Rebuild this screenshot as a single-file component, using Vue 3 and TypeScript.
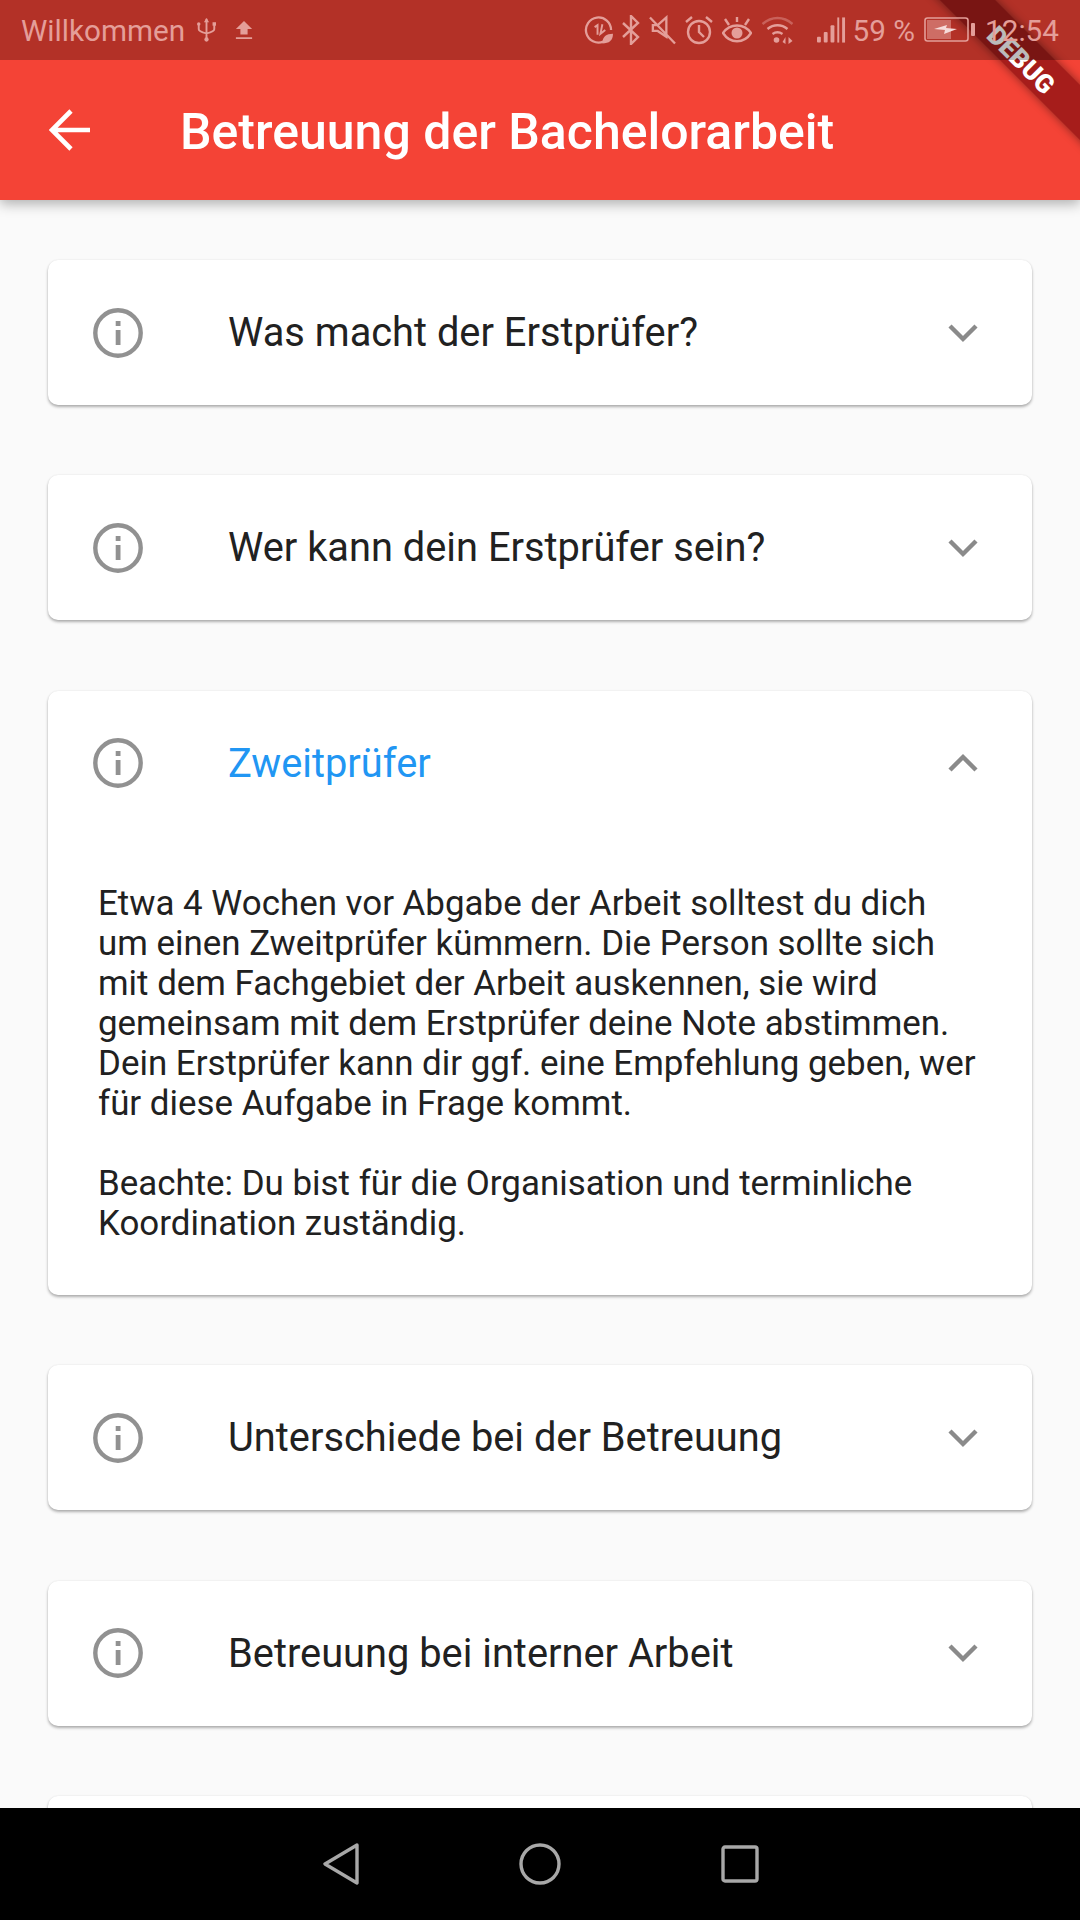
<script setup lang="ts">
interface Section {
  title: string;
  open?: boolean;
  body?: string[];
}

const sections: Section[] = [
  { title: 'Was macht der Erstprüfer?' },
  { title: 'Wer kann dein Erstprüfer sein?' },
  {
    title: 'Zweitprüfer',
    open: true,
    body: [
      'Etwa 4 Wochen vor Abgabe der Arbeit solltest du dich um einen Zweitprüfer kümmern. Die Person sollte sich mit dem Fachgebiet der Arbeit auskennen, sie wird gemeinsam mit dem Erstprüfer deine Note abstimmen. Dein Erstprüfer kann dir ggf. eine Empfehlung geben, wer für diese Aufgabe in Frage kommt.',
      'Beachte: Du bist für die Organisation und terminliche Koordination zuständig.',
    ],
  },
  { title: 'Unterschiede bei der Betreuung' },
  { title: 'Betreuung bei interner Arbeit' },
];
</script>

<template>
  <div class="screen">
    <header class="app-bar">
      <svg class="back" width="42" height="42" viewBox="0 0 42 42" fill="none" stroke="#fff" stroke-width="4.6">
        <path d="M41 21H4M22 2L3 21l19 19" />
      </svg>
      <h1>Betreuung der Bachelorarbeit</h1>
    </header>

    <main class="content">
      <section v-for="s in sections" :key="s.title" class="card">
        <div class="card-head">
          <svg class="info" width="50" height="50" viewBox="0 0 50 50" fill="none">
            <circle cx="25" cy="25" r="22.7" stroke="#919191" stroke-width="4.4" />
            <rect x="22.7" y="13" width="4.8" height="5" fill="#919191" />
            <rect x="22.7" y="22" width="4.8" height="15" fill="#919191" />
          </svg>
          <span class="card-title" :class="{ active: s.open }">{{ s.title }}</span>
          <svg class="chevron" :class="{ up: s.open }" width="30" height="20" viewBox="0 0 30 20" fill="none" stroke="#8a8a8a" stroke-width="4.4">
            <path d="M2 3l13 13L28 3" />
          </svg>
        </div>
        <div v-if="s.body" class="card-body">
          <p v-for="p in s.body" :key="p">{{ p }}</p>
        </div>
      </section>
      <!-- next card is only a sliver above the nav bar -->
      <section class="card card-peek"></section>
    </main>

    <nav class="nav-bar">
      <svg width="36" height="42" viewBox="0 0 36 42" fill="none" stroke="#a8a8a8" stroke-width="3.4" stroke-linejoin="round">
        <path d="M34 2L2 21l32 19z" />
      </svg>
      <svg width="42" height="42" viewBox="0 0 42 42" fill="none" stroke="#a8a8a8" stroke-width="3.4">
        <circle cx="21" cy="21" r="19" />
      </svg>
      <svg width="38" height="38" viewBox="0 0 38 38" fill="none" stroke="#a8a8a8" stroke-width="3.4">
        <rect x="2" y="2" width="34" height="34" rx="2" />
      </svg>
    </nav>

    <div class="debug"><span>DEBUG</span></div>

    <!-- system status bar sits over the app, ribbon included -->
    <div class="status-bar">
      <div class="status-left">
        <span>Willkommen</span>
        <svg class="st-usb" width="19" height="28" viewBox="0 0 22 28" fill="none" stroke="#e49e99" stroke-width="2.2">
          <path d="M11 1v24M2 8v5c0 2 2 3 9 5 7-2 9-3 9-5V8" />
          <path d="M11 0l-3 5h6z" fill="#e49e99" stroke="none" />
          <circle cx="11" cy="25" r="2.5" fill="#e49e99" stroke="none" />
          <circle cx="2" cy="7" r="2" fill="#e49e99" stroke="none" />
          <rect x="18" y="5" width="4" height="4" fill="#e49e99" stroke="none" />
        </svg>
        <svg class="st-up" width="18" height="22" viewBox="0 0 20 22" fill="#e49e99">
          <path d="M10 1l9 9h-5v6H6v-6H1zM1 19h18v2H1z" />
        </svg>
      </div>
      <div class="status-right">
        <svg width="29" height="30" viewBox="0 0 30 30" fill="none" stroke="#e49e99" stroke-width="2.4">
          <path d="M20 27A13 13 0 1 1 28 15" />
          <path d="M11 12l3-2v10M19 9l-2 10 5-4" stroke-width="2" />
          <path d="M19 29c0-7 4-10 11-10 0 7-4 10-11 10z" fill="#e49e99" stroke="none" />
        </svg>
        <svg width="18" height="30" viewBox="0 0 18 30" fill="none" stroke="#e49e99" stroke-width="2.4">
          <path d="M1 8l15 14-7 7V1l7 7L1 22" />
        </svg>
        <svg width="27" height="30" viewBox="0 0 28 30" fill="none" stroke="#e49e99" stroke-width="2.4">
          <path d="M4 10h5l9-8v20l-9-6H4zM1 2l26 27" />
        </svg>
        <svg width="28" height="30" viewBox="0 0 28 30" fill="none" stroke="#e49e99" stroke-width="2.4">
          <circle cx="14" cy="17" r="11" />
          <path d="M14 10v7l5 5M1 7l6-5M27 7l-6-5" />
        </svg>
        <svg width="30" height="28" viewBox="0 0 30 28" fill="none" stroke="#e49e99" stroke-width="2.4">
          <path d="M1 17c7-10 21-10 28 0-7 11-21 11-28 0zM3 3l4 6M27 3l-4 6M15 1v5" />
          <circle cx="15" cy="17" r="5.5" fill="#e49e99" stroke="none" />
        </svg>
        <svg width="33" height="28" viewBox="0 0 32 28" fill="none" stroke="#e49e99" stroke-width="2.4">
          <path d="M1 8c9-8 21-8 30 0" opacity=".45" />
          <path d="M6 13c6-5 14-5 20 0M11 18c3-2 7-2 10 0" />
          <circle cx="15" cy="24" r="2.8" fill="#e49e99" stroke="none" />
          <path d="M24 21v7l-3-2zM27 21v7l4-3z" fill="#e49e99" stroke="none" />
        </svg>
        <svg class="st-signal" width="29" height="28" viewBox="0 0 30 28" fill="#e49e99">
          <rect x="0" y="21" width="4" height="6" rx="1" />
          <rect x="7" y="16" width="4" height="11" rx="1" />
          <rect x="14" y="9" width="4" height="18" rx="1" />
          <rect x="21" y="1" width="2" height="26" />
          <rect x="26" y="1" width="3" height="26" />
        </svg>
        <span class="st-percent">59 %</span>
        <svg class="st-battery" width="52" height="26" viewBox="0 0 52 26" fill="none">
          <rect x="1" y="1" width="43" height="23" rx="2.5" stroke="#e49e99" stroke-width="1.6" />
          <rect x="3" y="3" width="24" height="19" fill="#e49e99" opacity=".55" />
          <path d="M10 12l13-4-1 3 11 1-13 5 1-4z" fill="#f6dcda" />
          <rect x="47" y="6" width="4" height="13" rx="1" fill="#e49e99" />
        </svg>
        <span>12:54</span>
      </div>
    </div>
  </div>
</template>

<style>
html,
body {
  margin: 0;
  background: #fafafa;
}
</style>

<style scoped>
.screen {
  position: relative;
  display: flex;
  flex-direction: column;
  width: 1080px;
  height: 1920px;
  overflow: hidden;
  background: #fafafa;
  font-family: Roboto, sans-serif;
}

.status-bar {
  position: absolute;
  z-index: 4;
  top: 0;
  left: 0;
  right: 0;
  display: flex;
  justify-content: space-between;
  align-items: center;
  height: 60px;
  padding: 0 21px;
  box-sizing: border-box;
  background: rgba(0, 0, 0, 0.265);
  color: #e49e99;
  font-size: 29.7px;
}

.status-left,
.status-right {
  display: flex;
  align-items: center;
}

.st-usb {
  margin-left: 12px;
}

.st-up {
  margin-left: 19px;
}

.status-right {
  gap: 9px;
}

.st-signal {
  margin-left: 14px;
}

.st-percent {
  margin-left: -2px;
}

.app-bar {
  position: relative;
  z-index: 2;
  display: flex;
  align-items: center;
  flex: 0 0 200px;
  box-sizing: border-box;
  padding: 60px 0 0 49px;
  background: #f44336;
  box-shadow: 0 4px 12px rgba(0, 0, 0, 0.3);
  color: #fff;
}

.app-bar h1 {
  margin: 3px 0 0 89px;
  font-size: 50px;
  font-weight: 500;
}

.content {
  display: flex;
  flex-direction: column;
  flex: 1;
  min-height: 0;
  gap: 70.4px;
  padding: 60px 48px 0;
  overflow: hidden;
}

.card {
  flex: none;
  border-radius: 10px;
  background: #fff;
  box-shadow: 0 2px 3px rgba(0, 0, 0, 0.3), 0 0 2px rgba(0, 0, 0, 0.08);
}

.card-head {
  display: flex;
  align-items: center;
  height: 145px;
  padding: 0 54px 0 45px;
}

.card-peek {
  height: 145px;
}

.card-title {
  flex: 1;
  margin-left: 85px;
  color: #212121;
  font-size: 39.8px;
}

.card-title.active {
  color: #2196f3;
}

.chevron.up {
  transform: rotate(180deg);
}

.card-body {
  padding: 48px 50px 51px;
  color: #212121;
  font-size: 34.9px;
  line-height: 40px;
}

.card-body p {
  margin: 0 0 40px;
}

.card-body p:last-child {
  margin-bottom: 0;
}

.nav-bar {
  position: relative;
  z-index: 2;
  display: flex;
  justify-content: center;
  align-items: center;
  gap: 160px;
  flex: 0 0 112px;
  padding-left: 2px;
  background: #000;
}

.debug {
  position: absolute;
  z-index: 3;
  top: 38px;
  right: -65px;
  width: 240px;
  height: 39px;
  transform: rotate(45deg);
  background: #a61d1b;
  box-shadow: 0 0 10px rgba(0, 0, 0, 0.45);
  text-align: center;
}

.debug span {
  display: block;
  color: #fff;
  font-size: 26px;
  font-weight: 900;
  line-height: 39px;
  transform: translate(-1px, 5px);
}
</style>
